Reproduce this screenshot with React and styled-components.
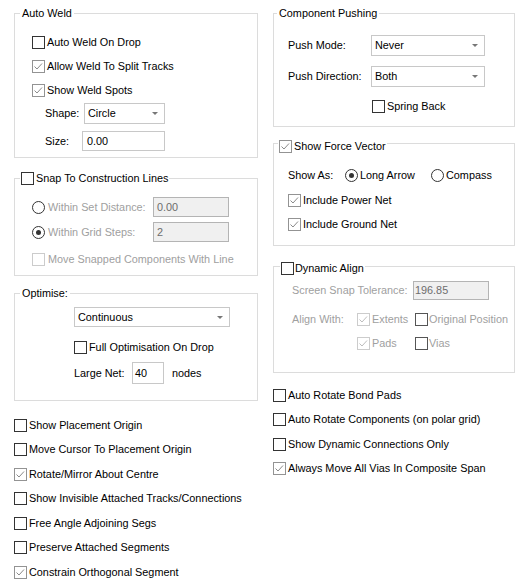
import React from 'react';
import styled, { createGlobalStyle } from 'styled-components';

const GlobalStyle = createGlobalStyle`
  html, body {
    margin: 0;
    padding: 0;
    background: #ffffff;
  }
  body {
    font-family: "Liberation Sans", Arial, sans-serif;
    font-size: 10.85px;
    line-height: 13px;
    color: #000;
  }
  * {
    box-sizing: border-box;
  }
`;

const Page = styled.div`
  display: flex;
  width: 524px;
  height: 585px;
  padding: 7px 0 0 14px;
  overflow: hidden;
`;

const Column = styled.div`
  display: flex;
  flex-direction: column;
  flex: none;
  width: ${({ $w }) => $w}px;
  margin-left: ${({ $ml }) => $ml || 0}px;
`;

const Group = styled.fieldset`
  margin: ${({ $mt }) => $mt || 0}px 0 0 0;
  padding: ${({ $pt }) => $pt}px 0 ${({ $pb }) => $pb}px 0;
  border: 1px solid #dcdcdc;
  min-width: 0;
`;

const Legend = styled.legend`
  display: flex;
  align-items: center;
  margin-left: ${({ $ml }) => $ml}px;
  padding: ${({ $drop }) => $drop || 0}px ${({ $px }) => $px ?? 2}px 0;
  line-height: 13px;
`;

const Body = styled.div`
  display: flex;
  flex-direction: column;
  padding-left: ${({ $pl }) => $pl}px;
`;

const Row = styled.div`
  display: flex;
  align-items: center;
  flex: none;
  height: ${({ $h }) => $h || 24}px;
  margin-top: ${({ $mt }) => $mt || 0}px;
  padding-left: ${({ $indent }) => $indent || 0}px;
`;

const List = styled.div`
  display: flex;
  flex-direction: column;
  padding-top: ${({ $pt }) => $pt}px;

  ${Row} {
    height: 24.5px;
  }
`;

const Label = styled.span`
  flex: none;
  width: ${({ $w }) => ($w ? `${$w}px` : 'auto')};
  margin-left: ${({ $ml }) => $ml || 0}px;
  color: ${({ $off }) => ($off ? '#a0a0a0' : '#000')};
  white-space: nowrap;
`;

const tones = {
  plain: { border: '#333333', mark: '#333333' },
  checked: { border: '#939393', mark: '#8a8a8a' },
  dim: { border: '#cccccc', mark: '#bdbdbd' },
  dark: { border: '#555555', mark: '#555555' },
};

const Box = styled.span`
  flex: none;
  display: flex;
  align-items: center;
  justify-content: center;
  width: 13px;
  height: 13px;
  border: 1px solid ${({ $tone }) => tones[$tone].border};
  background: #fff;
  margin-right: ${({ $gap }) => $gap ?? 2}px;
`;

const Item = styled.label`
  display: flex;
  align-items: center;
  flex: none;
  width: ${({ $w }) => ($w ? `${$w}px` : 'auto')};
  white-space: nowrap;
  color: ${({ $off }) => ($off ? '#a0a0a0' : '#000')};
`;

const Round = styled.span`
  flex: none;
  display: flex;
  align-items: center;
  justify-content: center;
  width: 13px;
  height: 13px;
  border-radius: 50%;
  border: 1px solid #333333;
  background: #fff;
  margin-right: ${({ $gap }) => $gap ?? 3}px;
`;

const Dot = styled.span`
  width: 5px;
  height: 5px;
  border-radius: 50%;
  background: #333333;
`;

const Combo = styled.div`
  flex: none;
  display: flex;
  align-items: center;
  width: ${({ $w }) => $w}px;
  height: ${({ $h }) => $h || 21}px;
  padding: 0 6px 0 3px;
  border: 1px solid #c8c8c8;
  background: #fff;
`;

const ComboText = styled.span`
  flex: 1;
  white-space: nowrap;
`;

const Arrow = styled.span`
  width: 0;
  height: 0;
  border-left: 3px solid transparent;
  border-right: 3px solid transparent;
  border-top: 3px solid #777777;
`;

const Field = styled.div`
  flex: none;
  display: flex;
  align-items: center;
  width: ${({ $w }) => $w}px;
  height: ${({ $h }) => $h || 20}px;
  padding-left: ${({ $pl }) => $pl ?? 3}px;
  border: 1px solid ${({ $off }) => ($off ? '#b4b4b4' : '#c8c8c8')};
  background: ${({ $off }) => ($off ? '#f0f0f0' : '#fff')};
  color: ${({ $off }) => ($off ? '#6d6d6d' : '#000')};
`;

function Check({ label, checked, tone, off, gap, w }) {
  const t = tone || (checked ? 'checked' : 'plain');
  return (
    <Item $off={off} $w={w}>
      <Box $tone={t} $gap={gap}>
        {checked && (
          <svg width="11" height="11" viewBox="0 0 11 11">
            <path d="M1.5 5.5 L4 8 L9 2.5" fill="none" stroke={tones[t].mark} strokeWidth="1" />
          </svg>
        )}
      </Box>
      {label}
    </Item>
  );
}

function Radio({ label, on, off, gap, w }) {
  return (
    <Item $off={off} $w={w}>
      <Round $gap={gap}>{on && <Dot />}</Round>
      {label}
    </Item>
  );
}

function Select({ value, w, h }) {
  return (
    <Combo $w={w} $h={h}>
      <ComboText>{value}</ComboText>
      <Arrow />
    </Combo>
  );
}

export default function App() {
  return (
    <>
      <GlobalStyle />
      <Page>
        <Column $w={244}>
          <Group $pt={10} $pb={6}>
            <Legend $ml={5}>Auto Weld</Legend>
            <Body $pl={17}>
              <Row><Check label="Auto Weld On Drop" /></Row>
              <Row><Check label="Allow Weld To Split Tracks" checked /></Row>
              <Row><Check label="Show Weld Spots" checked /></Row>
              <Row $h={21} $mt={1} $indent={13}>
                <Label $w={39}>Shape:</Label>
                <Select value="Circle" w={81} />
              </Row>
              <Row $h={20} $mt={7} $indent={13}>
                <Label $w={37}>Size:</Label>
                <Field $w={83} $pl={4}>0.00</Field>
              </Row>
            </Body>
          </Group>

          <Group $mt={14} $pt={12} $pb={4}>
            <Legend $ml={5} $px={1}>
              <Check label="Snap To Construction Lines" gap={2} />
            </Legend>
            <Body $pl={17}>
              <Row $h={20}>
                <Radio label="Within Set Distance:" off w={121} />
                <Field $w={76} $off>0.00</Field>
              </Row>
              <Row $h={20} $mt={5}>
                <Radio label="Within Grid Steps:" on off w={121} />
                <Field $w={76} $off>2</Field>
              </Row>
              <Row $mt={5}>
                <Check label="Move Snapped Components With Line" tone="dim" off gap={3} />
              </Row>
            </Body>
          </Group>

          <Group $mt={11} $pt={7} $pb={16}>
            <Legend $ml={5}>Optimise:</Legend>
            <Body $pl={59}>
              <Row $h={20}>
                <Select value="Continuous" w={156} h={20} />
              </Row>
              <Row $mt={8}><Check label="Full Optimisation On Drop" /></Row>
              <Row $h={22} $mt={3}>
                <Label $w={58}>Large Net:</Label>
                <Field $w={32} $h={22} $pl={2}>40</Field>
                <Label $ml={8}>nodes</Label>
              </Row>
            </Body>
          </Group>

          <List $pt={12}>
            <Row><Check label="Show Placement Origin" /></Row>
            <Row><Check label="Move Cursor To Placement Origin" /></Row>
            <Row><Check label="Rotate/Mirror About Centre" checked /></Row>
            <Row><Check label="Show Invisible Attached Tracks/Connections" /></Row>
            <Row><Check label="Free Angle Adjoining Segs" /></Row>
            <Row><Check label="Preserve Attached Segments" /></Row>
            <Row><Check label="Constrain Orthogonal Segment" checked /></Row>
          </List>
        </Column>

        <Column $w={242} $ml={15}>
          <Group $pt={15} $pb={8}>
            <Legend $ml={3}>Component Pushing</Legend>
            <Body $pl={14}>
              <Row $h={21}>
                <Label $w={83}>Push Mode:</Label>
                <Select value="Never" w={114} />
              </Row>
              <Row $h={21} $mt={10}>
                <Label $w={83}>Push Direction:</Label>
                <Select value="Both" w={114} />
              </Row>
              <Row $mt={7} $indent={84}>
                <Check label="Spring Back" />
              </Row>
            </Body>
          </Group>

          <Group $mt={7} $pt={12} $pb={9}>
            <Legend $ml={4} $px={1} $drop={6}>
              <Check label="Show Force Vector" checked />
            </Legend>
            <Body $pl={14}>
              <Row $h={20}>
                <Label $w={57}>Show As:</Label>
                <Radio label="Long Arrow" on gap={2} w={86} />
                <Radio label="Compass" gap={2} />
              </Row>
              <Row $mt={3}><Check label="Include Power Net" checked /></Row>
              <Row><Check label="Include Ground Net" checked /></Row>
            </Body>
          </Group>

          <Group $mt={12} $pt={6} $pb={17}>
            <Legend $ml={6} $px={1} $drop={4}>
              <Check label="Dynamic Align" gap={1} />
            </Legend>
            <Body $pl={18}>
              <Row $h={19}>
                <Label $w={121} $off>Screen Snap Tolerance:</Label>
                <Field $w={76} $h={19} $off $pl={1}>196.85</Field>
              </Row>
              <Row $mt={7}>
                <Label $w={65} $off>Align With:</Label>
                <Check label="Extents" checked tone="dim" off w={58} />
                <Check label="Original Position" tone="dark" off gap={1} />
              </Row>
              <Row $indent={65}>
                <Check label="Pads" checked tone="dim" off w={58} />
                <Check label="Vias" tone="dark" off gap={1} />
              </Row>
            </Body>
          </Group>

          <List $pt={10}>
            <Row><Check label="Auto Rotate Bond Pads" /></Row>
            <Row><Check label="Auto Rotate Components (on polar grid)" /></Row>
            <Row><Check label="Show Dynamic Connections Only" /></Row>
            <Row><Check label="Always Move All Vias In Composite Span" checked /></Row>
          </List>
        </Column>
      </Page>
    </>
  );
}
